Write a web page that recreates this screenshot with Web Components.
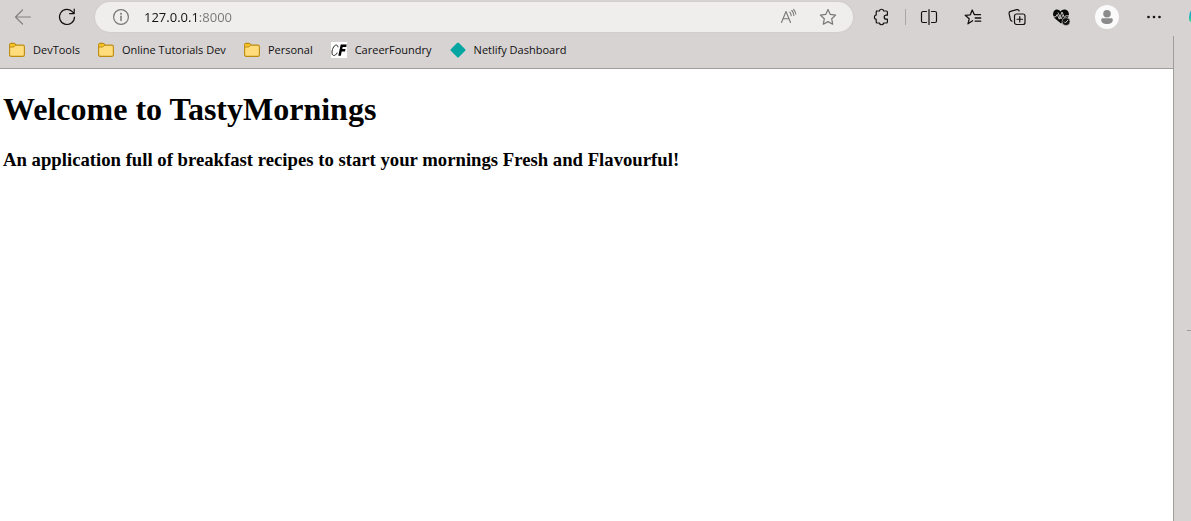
<!DOCTYPE html>
<html lang="en">
<head>
<meta charset="utf-8">
<title>TastyMornings</title>
<style>
body { margin: 0; background: #fff; }
</style>
</head>
<body>
<browser-window>
  <browser-toolbar slot="toolbar"></browser-toolbar>
  <bookmarks-bar slot="bookmarks">
    <bookmark-link icon="folder">DevTools</bookmark-link>
    <bookmark-link icon="folder">Online Tutorials Dev</bookmark-link>
    <bookmark-link icon="folder">Personal</bookmark-link>
    <bookmark-link icon="cf">CareerFoundry</bookmark-link>
    <bookmark-link icon="netlify">Netlify Dashboard</bookmark-link>
  </bookmarks-bar>
  <welcome-page></welcome-page>
</browser-window>
<script>
const line = (body, size = 18) =>
  `<svg width="${size}" height="${size}" viewBox="0 0 ${size} ${size}" fill="none" stroke="currentColor" stroke-width="1.2" stroke-linecap="round" stroke-linejoin="round" aria-hidden="true">${body}</svg>`;

const icons = {
  back: line('<path d="M16.5 9H1.5M8.5 2 1.5 9l7 7"/>'),
  reload: line('<path d="M16.5 9A7.5 7.5 0 1 1 14.8 4.2L16 5.5M16.2 1v4.6h-4.6" stroke-width="1.2"/>'),
  info: line('<circle cx="8" cy="8" r="7.4"/><path d="M8 7.3v4.2" stroke-width="1.5"/><circle cx="8" cy="4.8" r=".4" fill="currentColor"/>', 16),
  read: line('<path d="M1.5 14.5 6 3.5l4.5 11M3.2 10.8h5.7M9.8 4.2q1.3 1.3 1.4 3.4M11.8 2.5q2 2 2.1 5M13.6 1.3q1.8 2 2.2 4.7" stroke-width="1.1"/>'),
  star: line('<path d="m9 1.5 2.3 4.9 5.3.7-3.9 3.7 1 5.4L9 13.6l-4.7 2.6 1-5.4-3.9-3.7 5.3-.7z"/>'),
  puzzle: line('<path d="M4.3 3h3.1a2.2 2.2 0 0 1 4.3 0h2.7q1 0 1 1v3.2h-1.2a2 2 0 0 0 0 4h1.2V14q0 1-1 1h-2.7a2.2 2.2 0 0 1-4.3 0H5.2q-1 0-1-1v-2.6a2.3 2.3 0 0 1 0-4.5V4q0-.9 1-1" stroke-width="1.2"/>'),
  split: line('<path d="M6.5 3.5H3q-1.5 0-1.5 1.5v8q0 1.5 1.5 1.5h3.5M11.5 3.5H15q1.5 0 1.5 1.5v8q0 1.5-1.5 1.5h-3.5M9 1.5v15"/>'),
  favorites: line('<path d="M8.6 12.8 4 15.8l1.2-5-4-3.5 5.1-.5L8.2 2l2.2 4.7h6.1M11.2 10h5.5M11.2 13.2h5.5" stroke-width="1.3"/>'),
  collections: line('<rect x="6.5" y="6" width="10.5" height="10.5" rx="2"/><path d="M11.75 8.5v5.5M9 11.25h5.5M4 13.2Q2.7 12.7 2.4 11.5L1.1 5.7Q.8 3.9 2.5 3.4L8.8 1.6q1.8-.4 2.4 1.4"/>'),
  health: `<svg width="18" height="18" viewBox="0 0 18 18" aria-hidden="true"><path d="M8.5 3.5C7 .8 3.3.8 1.8 3.2.4 5.8 1 8.5 3 10.5l6 5 6.5-5.5C17.2 8 17.5 5.5 16 3.2 14.4.8 10 .8 8.5 3.5" fill="#080808"/><path d="M.5 8.8h3.3L5.2 6.4l2 4.8L10 4l2.4 5.6 1.2-1.8h3.6M6 4.5l3 6.5 2-4" fill="none" stroke="#d7d3d2" stroke-width=".9"/><circle cx="14" cy="13.6" r="4" fill="#111" stroke="#d7d3d2" stroke-width=".6"/><path d="m12.2 13.7 1.2 1.2 2.5-2.8" fill="none" stroke="#d7d3d2"/></svg>`,
  profile: `<svg width="24" height="24" viewBox="0 0 24 24" aria-hidden="true"><circle cx="12" cy="12" r="12" fill="#fafafa"/><circle cx="12" cy="8.7" r="3.8" fill="#8b8b8b"/><path d="M6.2 14.7q0-1.4 1.4-1.4h8.8q1.4 0 1.4 1.4c0 3-2.5 4.3-5.8 4.3s-5.8-1.3-5.8-4.3" fill="#8b8b8b"/></svg>`,
  more: `<svg width="18" height="18" viewBox="0 0 18 18" fill="currentColor" aria-hidden="true"><circle cx="3.5" cy="9" r="1.3"/><circle cx="9" cy="9" r="1.3"/><circle cx="14.5" cy="9" r="1.3"/></svg>`,
  copilot: `<svg width="9" height="18" viewBox="0 0 9 18" aria-hidden="true"><defs><linearGradient id="g" x2="0" y2="1"><stop stop-color="#279ad8"/><stop offset=".55" stop-color="#20b8bd"/><stop offset="1" stop-color="#40d98c"/></linearGradient></defs><path d="M9 2.5Q7 5 7 9v2q0 2.4 2 3z" fill="url(#g)"/></svg>`,
  folder: `<svg width="16" height="16" viewBox="0 0 16 16" aria-hidden="true"><path d="M.6 3Q.6 1.4 2.2 1.4h2.6q.7 0 1.2.5l1.2 1.2h6.6q1.6 0 1.6 1.6v8q0 1.7-1.6 1.7H2.2Q.6 14.4.6 12.7z" fill="#ffdc7c" stroke="#bd8b10" stroke-width="1.1"/><path d="M1.2 4.8V3q0-1 1-1h2.5q.4 0 .7.3l1 1-1 1q-.5.5-1.2.5z" fill="#f5c322"/><path d="M.8 5h3.5q.6 0 1-.4l1.5-1.5" fill="none" stroke="#bd8b10"/></svg>`,
  cf: `<svg width="16" height="16" viewBox="0 0 16 16" aria-hidden="true"><path d="M0 0h16v16H0z" fill="#fff"/><path d="M7 5.3C6.8 2.3 4.2 2.4 2.6 5 .7 8.2.3 12.7 2.4 13.4c1.5.4 3-.8 3.8-2.8" fill="none" stroke="#222"/><path d="M9.7 2.4h6l-.5 2.5h-3.5l-.5 2.2h3.3l-.5 2.4h-3.3l-.9 4.2H7.3z" fill="#000"/></svg>`,
  netlify: `<svg width="16" height="16" viewBox="0 0 16 16" aria-hidden="true"><path d="M7 1q1-1 2 0l6.2 6.2q.8.8 0 1.6L9 15q-1 1-2 0L.8 8.8Q0 8 .8 7.2z" fill="#05a6a1"/></svg>`
};

class ShadowElement extends HTMLElement {
  constructor() {
    super();
    this.attachShadow({ mode: 'open' });
  }
  connectedCallback() {
    const template = document.createElement('template');
    template.innerHTML = this.render();
    this.shadowRoot.replaceChildren(template.content.cloneNode(true));
  }
}

customElements.define('tool-button', class extends ShadowElement {
  render() {
    return `<style>
      :host { display: block; flex: none; width: 32px; height: 30px; color: #111; }
      button { display: flex; align-items: center; justify-content: center; width: 100%; height: 100%; padding: 0; border: 0; background: none; color: inherit; }
      svg { display: block; flex: none; }
    </style><button type="button" aria-label="${this.getAttribute('label')}">${icons[this.getAttribute('icon')]}</button>`;
  }
});

customElements.define('address-bar', class extends ShadowElement {
  render() {
    return `<style>
      :host { display: flex; align-items: center; flex: 1; min-width: 0; height: 30px; box-sizing: border-box; padding: 0 9px 0 18px; border-radius: 15px; background: #efeeec; box-shadow: 0 0 2px #c8c4c3; }
      svg { display: block; flex: none; color: #777; }
      input { flex: 1; min-width: 0; height: 30px; margin: 0 0 0 15px; padding: 0; border: 0; outline: 0;
        font: 13px/18px "Open Sans", sans-serif; color: #111;
        background: linear-gradient(90deg, #111 54px, #757575 54px); background-clip: text; -webkit-background-clip: text; -webkit-text-fill-color: transparent; }
      tool-button { color: #777; }
      .star { margin-left: 7px; }
    </style>
    ${icons.info}
    <input type="text" aria-label="Address" value="127.0.0.1:8000" spellcheck="false">
    <tool-button icon="read" label="Read aloud"></tool-button>
    <tool-button class="star" icon="star" label="Add to favorites"></tool-button>`;
  }
});

customElements.define('browser-toolbar', class extends ShadowElement {
  render() {
    return `<style>
      :host { display: flex; align-items: flex-start; gap: 12px; height: 36px; box-sizing: border-box; padding: 2px 0 0 7px; }
      .back { color: #858282; }
      .rule { flex: none; width: 1px; height: 16px; margin: 7px -5px 0 -4px; background: #aaa6a5; }
      .profile { margin-left: 2px; }
      .menu { margin-left: 3px; }
      .copilot { width: 9px; }
    </style>
    <tool-button class="back" icon="back" label="Back"></tool-button>
    <tool-button icon="reload" label="Refresh"></tool-button>
    <address-bar></address-bar>
    <tool-button icon="puzzle" label="Extensions"></tool-button>
    <span class="rule"></span>
    <tool-button icon="split" label="Split screen"></tool-button>
    <tool-button icon="favorites" label="Favorites"></tool-button>
    <tool-button icon="collections" label="Collections"></tool-button>
    <tool-button icon="health" label="Browser essentials"></tool-button>
    <tool-button class="profile" icon="profile" label="Profile"></tool-button>
    <tool-button class="menu" icon="more" label="Settings and more"></tool-button>
    <tool-button class="copilot" icon="copilot" label="Copilot"></tool-button>`;
  }
});

customElements.define('bookmark-link', class extends ShadowElement {
  render() {
    return `<style>
      :host { display: block; flex: none; }
      a { display: flex; align-items: center; gap: 8px; color: #111; text-decoration: none; font: 11px/16px "Open Sans", sans-serif; white-space: nowrap; }
      svg { display: block; flex: none; }
    </style><a href="#">${icons[this.getAttribute('icon')]}<span><slot></slot></span></a>`;
  }
});

customElements.define('bookmarks-bar', class extends ShadowElement {
  render() {
    return `<style>
      :host { display: flex; gap: 18px; padding: 6px 9px 10px; border-bottom: 1px solid #a09c9c; background: #d7d3d2; }
    </style><slot></slot>`;
  }
});

customElements.define('welcome-page', class extends ShadowElement {
  render() {
    return `<style>
      :host { display: block; padding: 0 3px; font-family: "Liberation Serif", serif; color: #000; }
      h1 { margin: 21px 0; font-size: 32px; line-height: 38px; }
      h3 { margin: 0; line-height: 22px; }
    </style>
    <h1>Welcome to TastyMornings</h1>
    <h3>An application full of breakfast recipes to start your mornings Fresh and Flavourful!</h3>`;
  }
});

customElements.define('browser-window', class extends ShadowElement {
  render() {
    return `<style>
      :host { display: flex; flex-direction: column; min-height: 100vh; overflow: hidden; background: #d7d3d2; }
      .body { display: flex; flex: 1; }
      main { flex: 1; min-width: 0; background: #fff; }
      aside { flex: none; display: flex; flex-direction: column; align-items: flex-end; width: 17px; border-left: 1px solid #a09c9c; }
      aside hr { width: 4px; height: 1px; margin: 294px 0 0; border: 0; background: #a09c9c; }
    </style>
    <slot name="toolbar"></slot>
    <div class="body">
      <main><slot name="bookmarks"></slot><slot></slot></main>
      <aside><hr></aside>
    </div>`;
  }
});
</script>
</body>
</html>
